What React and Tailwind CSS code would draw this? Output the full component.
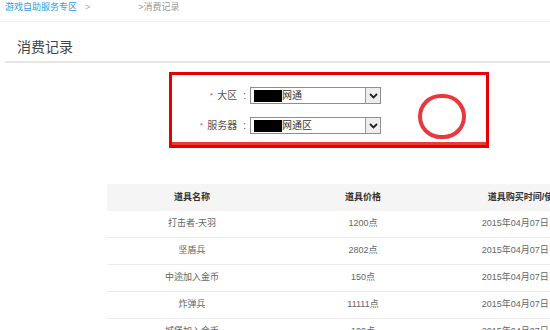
import React from "react";

const rows = [
    { name: "打击者-天羽", price: "1200点", time: "2015年04月07日 12:21:08" },
    { name: "坚盾兵", price: "2802点", time: "2015年04月07日 12:20:41" },
    { name: "中途加入金币", price: "150点", time: "2015年04月07日 12:18:36" },
    { name: "炸弹兵", price: "11111点", time: "2015年04月07日 12:16:02" },
    { name: "城堡加入金币", price: "100点", time: "2015年04月07日 12:10:55" },
];

function FakeSelect({ value }) {
    return (
        <div className="flex h-[17px] w-[131px] items-center border border-[#8e8e8e] bg-white">
            <span className="ml-[3px] h-[12px] w-[28px] bg-black" />
            <span className="flex-1 text-[10px] leading-none text-[#333]">{value}</span>
            <span className="flex h-[15px] w-[15px] items-center justify-center border-l border-[#9a9a9a] bg-[#eeeeee]">
                <svg width="9" height="6" viewBox="0 0 9 6">
                    <path d="M1 1 L4.5 4.5 L8 1" fill="none" stroke="#222" strokeWidth="1.8" />
                </svg>
            </span>
        </div>
    );
}

function FormRow({ label, value }) {
    return (
        <div className="flex h-[17px] items-center">
            <div className="flex w-[78px] items-center justify-end pr-[4px] text-[10px] leading-none text-[#555]">
                <span className="mr-[4px] text-[8px] text-[#e84a4a]">*</span>
                <span>{label}</span>
                <span className="ml-[6px]">:</span>
            </div>
            <FakeSelect value={value} />
        </div>
    );
}

export default function App() {
    return (
        <div
            className="h-[330px] w-[550px] overflow-hidden bg-white"
            style={{ fontFamily: '"Liberation Sans", "Noto Sans CJK SC", sans-serif' }}
        >
            <div className="flex h-[22px] items-center border-b border-[#f0f0f0] pb-[5px] text-[9px]">
                <span className="ml-[5px] text-[#2d9de2]">游戏自助服务专区</span>
                <span className="ml-[8px] text-[#aaa]">&gt;</span>
                <span className="ml-[48px] text-[#999]">&gt;消费记录</span>
            </div>
            <div className="ml-[5px] flex h-[41px] items-end border-b-2 border-[#e6e6e6] pb-[4px] pl-[12px] text-[14px] leading-[20px] text-[#444]">
                消费记录
            </div>
            <div className="relative ml-[169px] mt-[9px] h-[76px] w-[320px] border-[3px] border-[#e60000]">
                <div className="flex h-[67px] flex-col gap-[13px] pt-[12px]">
                    <FormRow label="大区" value="网通" />
                    <FormRow label="服务器" value="网通区" />
                </div>
                <div className="h-[3px] bg-[#ea3b3b]" />
                <div className="absolute left-[246px] top-[19px] h-[45px] w-[48px] rounded-full border-[4px] border-[#e8383d]" />
            </div>
            <div className="ml-[107px] mt-[36px] w-[682px]">
                <div className="grid h-[27px] grid-cols-[170px_172px_170px_170px] items-center bg-[#f5f5f5] text-[9px] font-bold text-[#333]">
                    <div className="text-center">道具名称</div>
                    <div className="text-center">道具价格</div>
                    <div className="whitespace-nowrap text-center">道具购买时间/使用状态</div>
                    <div className="text-center">备注</div>
                </div>
                {rows.map((r) => (
                    <div
                        key={r.name}
                        className="grid h-[27px] grid-cols-[170px_172px_170px_170px] items-center border-b border-[#ebebeb] text-[9px] text-[#666]"
                    >
                        <div className="text-center">{r.name}</div>
                        <div className="text-center">{r.price}</div>
                        <div className="whitespace-nowrap text-center">{r.time}</div>
                        <div className="text-center">成功</div>
                    </div>
                ))}
            </div>
        </div>
    );
}
